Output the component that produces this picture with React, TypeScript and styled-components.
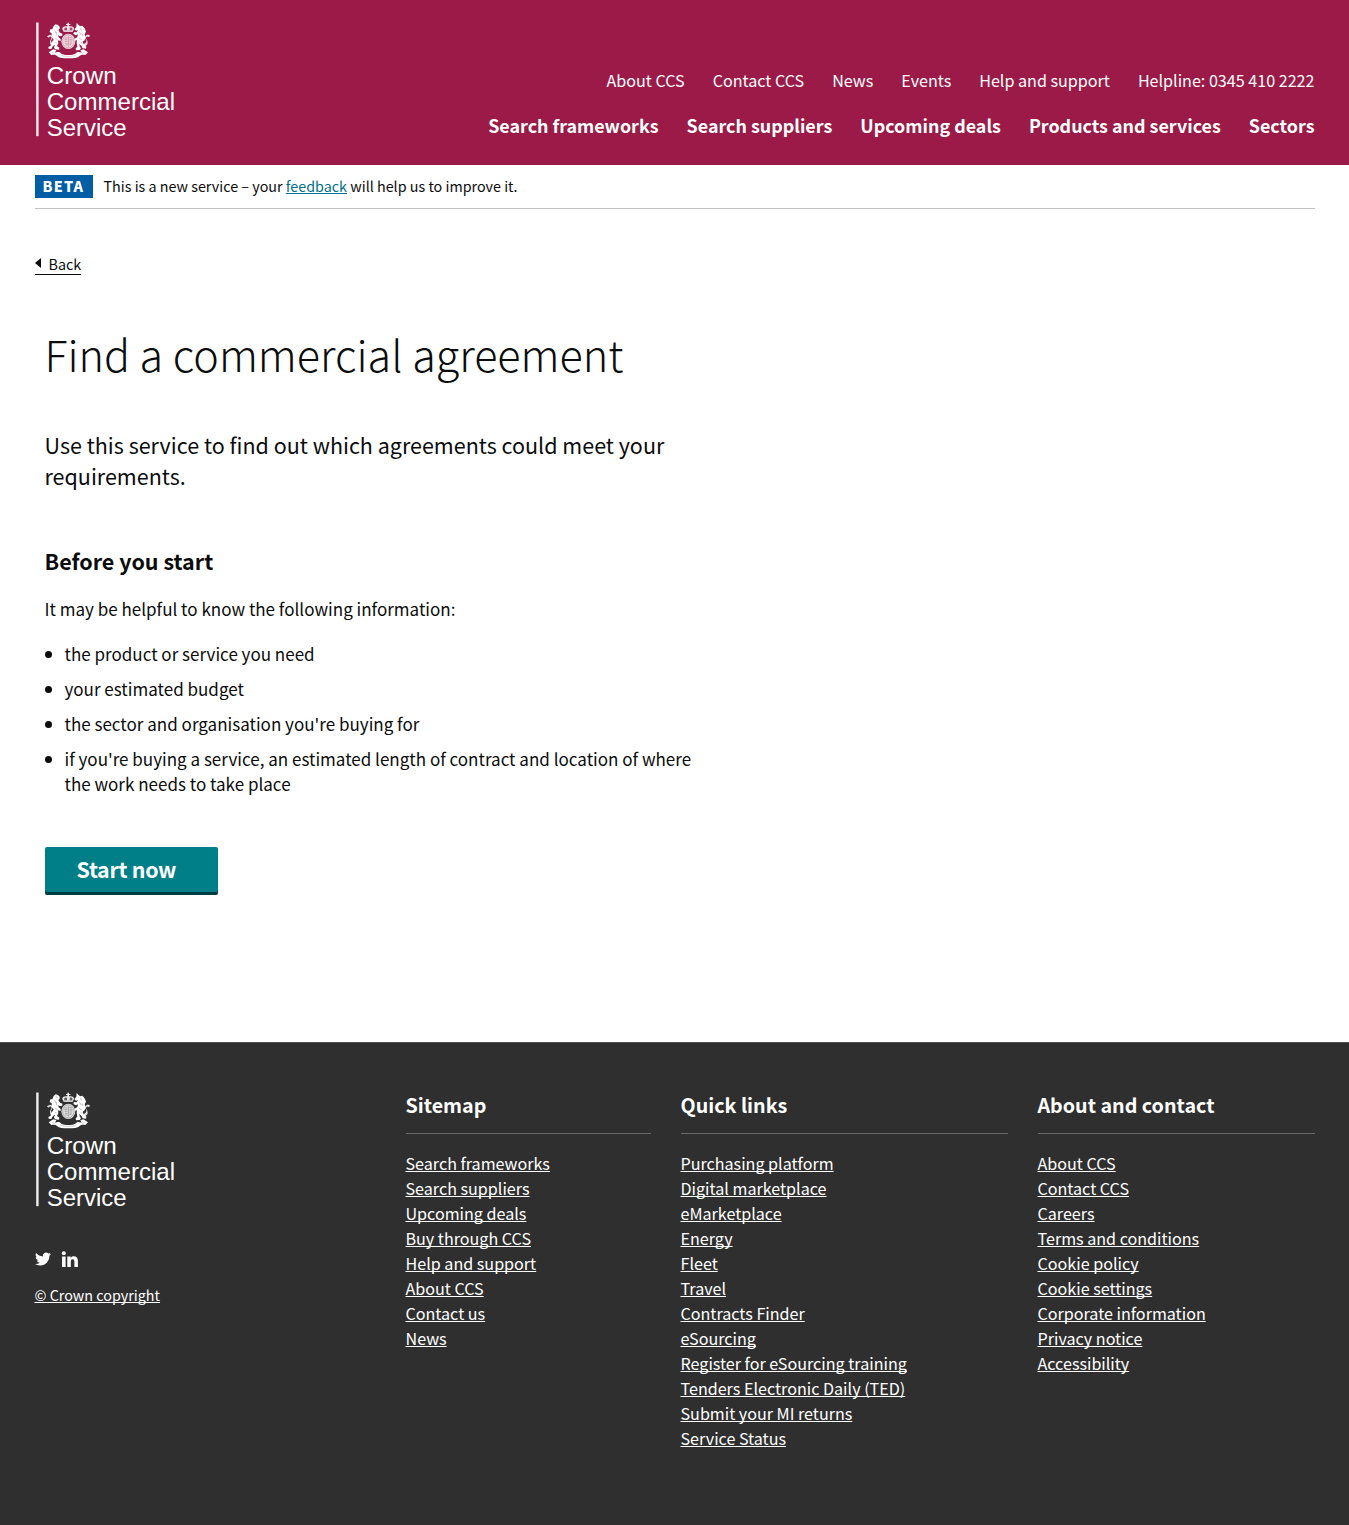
import React from "react";
import styled, { createGlobalStyle } from "styled-components";

const GlobalStyle = createGlobalStyle`
  *, *::before, *::after { box-sizing: border-box; }
  html, body { margin: 0; padding: 0; }
  body {
    background: #ffffff;
    color: #0b0c0c;
    font-family: "Noto Sans CJK SC", "Noto Sans", sans-serif;
    font-size: 17.02px;
    line-height: 25px;
  }
  h1, h2, p, ul { margin: 0; padding: 0; }
`;

const Container = styled.div`
  width: 1280px;
  margin: 0 auto;
`;

const Header = styled.header`
  height: 165px;
  background: #9b1a47;
`;

const HeaderInner = styled(Container)`
  display: flex;
  justify-content: space-between;
  align-items: flex-start;
  padding-top: 22px;
`;

const Navigation = styled.div`
  display: flex;
  flex-direction: column;
  align-items: flex-end;
  gap: 19px;
  padding-top: 45px;
`;

const NavRow = styled.nav<{ $strong?: boolean }>`
  display: flex;
  gap: 28px;
  font-size: ${(p) => (p.$strong ? "17.9px" : "16.13px")};
  font-weight: ${(p) => (p.$strong ? 700 : 400)};
  line-height: 26px;
`;

const NavLink = styled.a`
  color: #ffffff;
  text-decoration: none;
  white-space: nowrap;
`;

const PhaseBanner = styled.div`
  display: flex;
  align-items: flex-start;
  height: 44px;
  padding-top: 10px;
  border-bottom: 1px solid #bfc1c3;
`;

const PhaseTag = styled.strong`
  width: 58px;
  height: 23px;
  margin-right: 11px;
  padding-left: 8px;
  background: #005ea5;
  color: #ffffff;
  font-size: 14.34px;
  font-weight: 900;
  line-height: 22px;
  letter-spacing: 1.2px;
`;

const PhaseText = styled.span`
  font-size: 14.34px;
  line-height: 22px;
  white-space: nowrap;
`;

const FeedbackLink = styled.a`
  color: #00708c;
  text-decoration: underline;
`;

const BackLink = styled.a`
  display: flex;
  align-items: center;
  width: 46px;
  height: 20px;
  margin-top: 46px;
  padding-bottom: 2px;
  border-bottom: 1px solid #0b0c0c;
  color: #0b0c0c;
  font-size: 14.34px;
  line-height: 17px;
  text-decoration: none;

  &::before {
    content: "";
    margin: -2px 8px 0 0;
    border: 5px solid transparent;
    border-left-width: 0;
    border-right: 6px solid #0b0c0c;
  }
`;

const Main = styled.main`
  width: 680px;
  height: 767px;
  padding: 45px 0 0 10px;
`;

const Title = styled.h1`
  font-size: 43.1px;
  font-weight: 200;
  line-height: 66px;
  white-space: nowrap;
`;

const Lead = styled.p`
  margin-top: 43px;
  font-size: 21.5px;
  line-height: 31px;
`;

const SectionTitle = styled.h2`
  margin-top: 54px;
  font-size: 21.5px;
  font-weight: 700;
  line-height: 31px;
`;

const Intro = styled.p`
  margin-top: 20px;
`;

const Bullets = styled.ul`
  display: flex;
  flex-direction: column;
  gap: 10px;
  margin-top: 20px;
  padding-left: 20px;
`;

const Bullet = styled.li`
  width: 640px;
`;

const StartButton = styled.a`
  display: block;
  width: 173px;
  height: 45px;
  margin-top: 51px;
  padding-left: 32px;
  border-radius: 2px;
  background: #007f89;
  box-shadow: 0 3px 0 #003d42;
  color: #ffffff;
  font-size: 21.3px;
  font-weight: 700;
  letter-spacing: -0.25px;
  line-height: 43px;
  text-decoration: none;
`;

const Footer = styled.footer`
  height: 483px;
  background: #2f2f2f;
  border-top: 1px solid #505050;
`;

const FooterInner = styled(Container)`
  display: grid;
  grid-template-columns: 341px 245px 327px 277px;
  column-gap: 30px;
  padding-top: 49px;
`;

const Social = styled.div`
  display: flex;
  gap: 10px;
  margin-top: 41px;
`;

const FooterTitle = styled.h2`
  height: 42px;
  border-bottom: 1px solid #6a6a6a;
  color: #ffffff;
  font-size: 19.7px;
  font-weight: 700;
  line-height: 25px;
`;

const FooterLinks = styled.ul`
  margin-top: 17px;
  font-size: 16.13px;
  list-style: none;
`;

const FooterLink = styled.a`
  color: #ffffff;
  text-decoration: underline;
  text-underline-offset: 1px;
  text-decoration-thickness: 1px;
  text-decoration-skip-ink: none;
  white-space: nowrap;
`;

const Copyright = styled.p`
  margin-top: 14px;
  font-size: 14.34px;
`;

const LogoSvg = styled.svg`
  display: block;
  fill: #ffffff;
  font-family: "Liberation Sans", Arial, sans-serif;
  font-size: 24.4px;
`;

function Logo({ ink }: { ink: string }) {
  return (
    <LogoSvg width="142" height="118" viewBox="0 0 142 118" role="img" aria-label="Crown Commercial Service">
      <rect x="1.2" y="0.5" width="2.4" height="113.7" opacity="0.92" />
      <g transform="translate(-10 -12) scale(0.33333)">
        {/* crown */}
        <path d="M127 38h5v4h4v3h-4v4c9-2 16 2 15 8-1 3-3 5-4 9h-27c-1-4-3-6-4-9-1-6 6-10 15-8v-4h-4v-3h4z" opacity="0.9" />
        <path d="M117 57c1-4 6-6 9-3v7h-7zM134 54c4-3 8-1 9 3l-2 4h-7z" fill={ink} opacity="0.75" />
        <path d="M116 63h27" stroke={ink} strokeWidth="1.5" opacity="0.6" />
        {/* garter and shield */}
        <ellipse cx="130" cy="94" rx="21" ry="23" opacity="0.85" />
        <ellipse cx="130" cy="94" rx="17" ry="19.5" fill="none" stroke={ink} strokeWidth="1.6" opacity="0.5" />
        <path d="M119 84h8M118 89h9M119 94h8M133 83h8M133 88h10M133 93h9M119 100h8M121 105h7M133 99h8M133 104h6M130 78v32" fill="none" stroke={ink} strokeWidth="2" opacity="0.5" />
        {/* lion */}
        <path d="M86 48l6-5 7 2 5 5v6l-4 4 5 8 7 3v6l-8 1-4-3 1 7 6 5v6l-8-2 1 9-4 8 7 5-1 6-12-1-3-6 3-8-7 5-4 8-8-1-1-5 7-4 3-10 6-8-6-8 0-11-6-4 2-8 6 0z" />
        <path d="M82 111c-4-5-7-9-7-15 0-7 6-9 4-14-2-4-6-2-8 1-2-3-5-2-5-5 5 0 5-4 9-4 7 1 9 8 6 13-4 5-4 10 4 17z" opacity="0.85" />
        <path d="M92 50l6 3M88 61l7 8M92 66l4 10M90 84l8 6M89 97l6 2" fill="none" stroke={ink} strokeWidth="2" opacity="0.45" />
        {/* unicorn */}
        <path d="M155 39l10 10 7-2 7 8 4 10-4 8 3 8-3 10-6 4 3 8 8 7-1 6-10-1-4-8-6-5 1 7 4 6-4 5-11 1-1-6 5-5-2-11 1-8-7 1v-6l8-5 2-8-6 3-8-4 2-6 8 1 4-7-6 2-5-4 6-8z" />
        <path d="M178 111c7-5 11-9 10-15-1-6-7-9-4-14 2-4 5-2 7 0 1-3 3-2 5-4-3-1-4-5-9-4-7 2-8 9-5 14 4 5 3 9-6 15z" opacity="0.85" />
        <path d="M167 53l2 9M163 66l6 10M171 70l3 8M162 85l8 4M167 97l5 3" fill="none" stroke={ink} strokeWidth="2" opacity="0.45" />
        {/* motto ribbon */}
        <path d="M71 127l14-9 9 3-4 7c8-3 15-3 19 3 8 5 34 5 42 0 4-6 11-6 19-3l-4-7 9-3 14 9-8 8c-8-2-13-1-17 3-6 6-18 7-34 7s-28-1-34-7c-4-4-9-5-17-3z" />
        <path d="M81 127l8 3M179 127l-8 3M106 134c4 4 12 5 24 5s20-1 24-5" fill="none" stroke={ink} strokeWidth="1.6" opacity="0.4" />
      </g>
      <text x="11.7" y="61.6" textLength="70" lengthAdjust="spacingAndGlyphs">Crown</text>
      <text x="11.7" y="87.6" textLength="128.3" lengthAdjust="spacingAndGlyphs">Commercial</text>
      <text x="11.7" y="113.6" textLength="79.800" lengthAdjust="spacingAndGlyphs">Service</text>
    </LogoSvg>
  );
}

const topNav = ["About CCS", "Contact CCS", "News", "Events", "Help and support", "Helpline: 0345 410 2222"];
const mainNav = ["Search frameworks", "Search suppliers", "Upcoming deals", "Products and services", "Sectors"];

const footerColumns = [
  {
    title: "Sitemap",
    links: ["Search frameworks", "Search suppliers", "Upcoming deals", "Buy through CCS", "Help and support", "About CCS", "Contact us", "News"],
  },
  {
    title: "Quick links",
    links: [
      "Purchasing platform", "Digital marketplace", "eMarketplace", "Energy", "Fleet", "Travel", "Contracts Finder",
      "eSourcing", "Register for eSourcing training", "Tenders Electronic Daily (TED)", "Submit your MI returns", "Service Status",
    ],
  },
  {
    title: "About and contact",
    links: [
      "About CCS", "Contact CCS", "Careers", "Terms and conditions", "Cookie policy", "Cookie settings",
      "Corporate information", "Privacy notice", "Accessibility",
    ],
  },
];

const needs = [
  "the product or service you need",
  "your estimated budget",
  "the sector and organisation you're buying for",
  "if you're buying a service, an estimated length of contract and location of where the work needs to take place",
];

export default function App() {
  return (
    <>
      <GlobalStyle />
      <Header>
        <HeaderInner>
          <Logo ink="#9b1a47" />
          <Navigation>
            <NavRow>{topNav.map((t) => <NavLink key={t}>{t}</NavLink>)}</NavRow>
            <NavRow $strong>{mainNav.map((t) => <NavLink key={t}>{t}</NavLink>)}</NavRow>
          </Navigation>
        </HeaderInner>
      </Header>
      <Container>
        <PhaseBanner>
          <PhaseTag>BETA</PhaseTag>
          <PhaseText>
            This is a new service – your <FeedbackLink>feedback</FeedbackLink> will help us to improve it.
          </PhaseText>
        </PhaseBanner>
        <BackLink>Back</BackLink>
        <Main>
          <Title>Find a commercial agreement</Title>
          <Lead>Use this service to find out which agreements could meet your requirements.</Lead>
          <SectionTitle>Before you start</SectionTitle>
          <Intro>It may be helpful to know the following information:</Intro>
          <Bullets>{needs.map((t) => <Bullet key={t}>{t}</Bullet>)}</Bullets>
          <StartButton>Start now</StartButton>
        </Main>
      </Container>
      <Footer>
        <FooterInner>
          <div>
            <Logo ink="#2f2f2f" />
            <Social>
              <svg width="16" height="16" viewBox="0 0 24 24" fill="#fff" aria-label="Twitter">
                <path d="M23.95 4.57a10 10 0 0 1-2.82.77 4.96 4.96 0 0 0 2.16-2.72c-.95.55-2 .95-3.13 1.18a4.92 4.92 0 0 0-8.38 4.48C7.69 8.1 4.07 6.13 1.64 3.16a4.82 4.82 0 0 0-.67 2.48c0 1.71.87 3.21 2.19 4.1a4.9 4.9 0 0 1-2.23-.62v.06a4.92 4.92 0 0 0 3.95 4.83 5 5 0 0 1-2.21.08 4.94 4.94 0 0 0 4.6 3.42A9.87 9.87 0 0 1 0 19.54a13.99 13.99 0 0 0 7.55 2.21c9.05 0 14-7.5 14-13.98 0-.21 0-.42-.02-.63a9.94 9.94 0 0 0 2.46-2.55z" />
              </svg>
              <svg width="17" height="17" viewBox="0 0 17 17" fill="#fff" aria-label="LinkedIn">
                <circle cx="2.8" cy="2.3" r="2" />
                <path d="M1 5.5h3.6V16H1zM6.300 5.500h3.400v1.400c.6-1 1.600-1.700 3-1.700 2.900 0 4.200 1.700 4.200 4.700V16h-3.500v-5.200c0-1.700-.5-2.500-1.700-2.500s-1.900.8-1.900 2.500V16H6.300z" />
              </svg>
            </Social>
            <Copyright><FooterLink>© Crown copyright</FooterLink></Copyright>
          </div>
          {footerColumns.map((c) => (
            <div key={c.title}>
              <FooterTitle>{c.title}</FooterTitle>
              <FooterLinks>{c.links.map((t) => <li key={t}><FooterLink>{t}</FooterLink></li>)}</FooterLinks>
            </div>
          ))}
        </FooterInner>
      </Footer>
    </>
  );
}
